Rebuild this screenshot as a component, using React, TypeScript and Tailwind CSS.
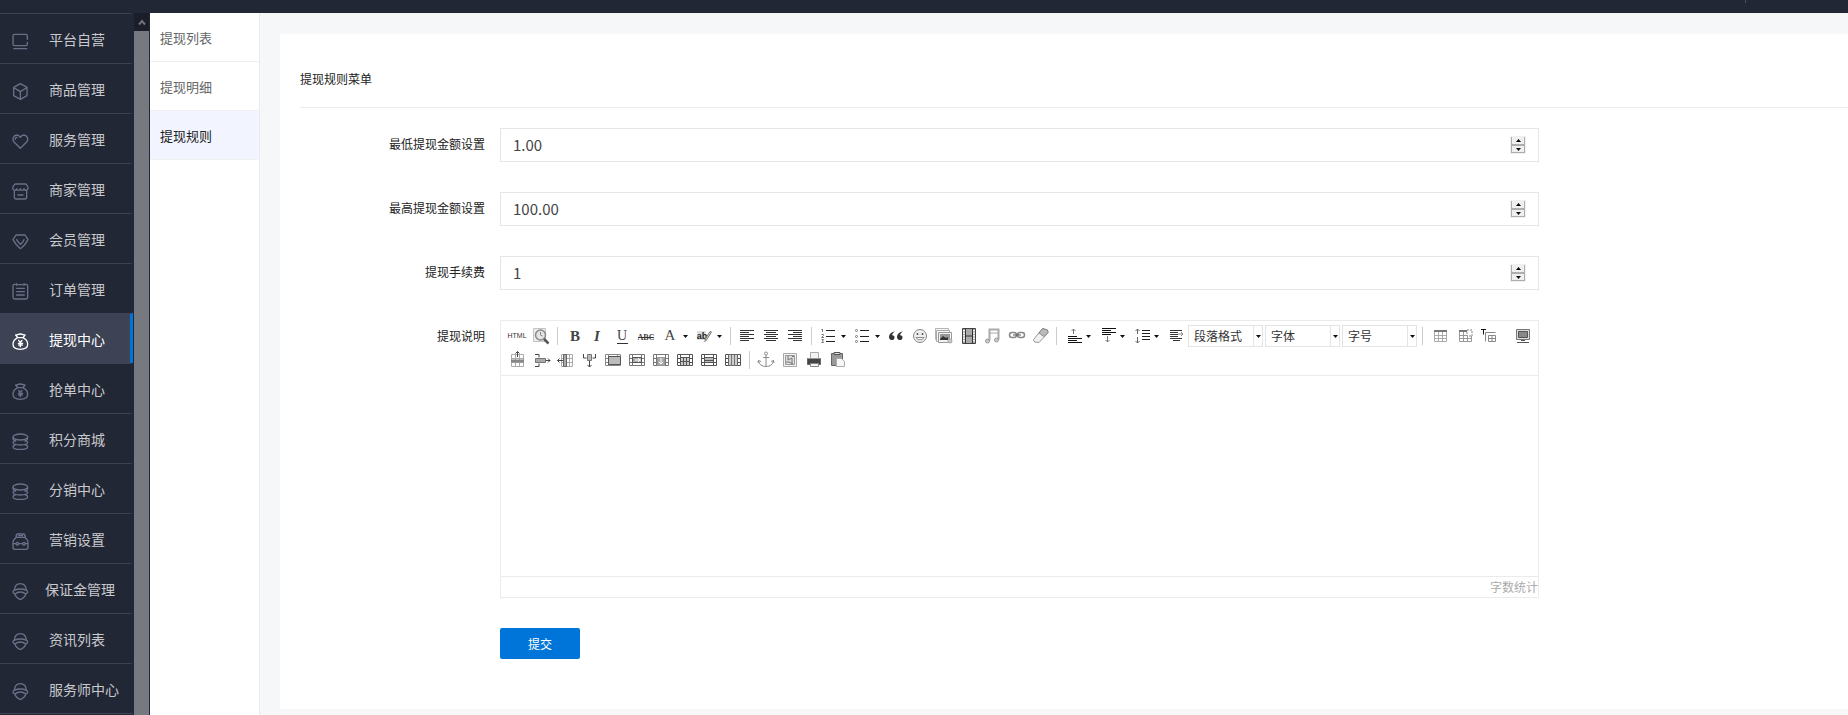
import { useState } from 'react'
import type { ReactNode } from 'react'
import clsx from 'clsx'

type IconProps = { children: ReactNode }

// ---------- sidebar icons ----------

const MenuIcon = ({ children }: IconProps) => (
  <svg
    viewBox="0 0 51 51"
    className="h-[17px] w-[17px] shrink-0"
    fill="none"
    stroke="currentColor"
    strokeWidth="4"
    strokeLinecap="round"
    strokeLinejoin="round"
    aria-hidden="true"
  >
    {children}
  </svg>
)

const screenIcon = (
  <MenuIcon>
    <path d="M46 19V9c0-3-2-5-5-5H8C5 4 3 6 3 9v24c0 3 2 5 5 5h33c3 0 5-2 5-5v-5M6 47h38" />
  </MenuIcon>
)

const boxIcon = (
  <MenuIcon>
    <path d="M25 2 45 13v25L25 49 5 38V13zM25 48V26M25 26l-11-7M25 26l18-11M9 16l2 1" />
  </MenuIcon>
)

const heartIcon = (
  <MenuIcon>
    <path d="M25 46 6 27C0 20 3 7 14 6c5 0 9 3 11 7 2-4 6-7 11-7 11 1 14 14 8 21zM10 19c0-4 2-6 5-6" />
  </MenuIcon>
)

const shopIcon = (
  <MenuIcon>
    <path d="M11 3h29c4 0 8 8 8 13 0 7-11 8-12 1-1 7-10 7-11 0-1 7-10 7-11 0-1 7-12 6-12-1C2 11 7 3 11 3zM7 24v18c0 4 2 6 6 6h25c4 0 6-2 6-6V24M18 36h15" />
  </MenuIcon>
)

const gemIcon = (
  <MenuIcon>
    <path d="M12 6h27l9 14c-6 12-13 20-21 26-1 1-2 1-3 0C16 40 9 32 3 20zM14 20c4 7 7 11 11 14 5-3 8-7 11-14" />
  </MenuIcon>
)

const orderIcon = (
  <MenuIcon>
    <path d="M12 4H8C5 4 3 6 3 9v34c0 3 2 5 5 5h34c3 0 5-2 5-5V9c0-3-2-5-5-5h-4M18 5h14M14 16h23M14 26h23M14 36h23M14 2v5M36 2v5" />
  </MenuIcon>
)

const purseIcon = (
  <MenuIcon>
    <path d="M17 14C9 18 3 26 3 34c0 9 8 15 22 15s22-6 22-15c0-8-6-16-14-20M17 14 11 6c5 1 6-3 14-3s9 4 14 3l-6 8zM20 22l5 7 5-7M19 31h13M20 36h11M25 29v12" />
  </MenuIcon>
)

const coinsIcon = (
  <MenuIcon>
    <ellipse cx="25" cy="12" rx="22" ry="9" />
    <path d="M3 14c0 6 4 9 8 10M47 14c0 6-4 9-8 10M11 23c-5 1-8 3-8 5 0 5 10 8 22 8s22-3 22-8c0-2-3-4-8-5M9 36c-4 1-6 3-6 5 0 5 10 8 22 8s22-3 22-8c0-2-2-4-6-5" />
  </MenuIcon>
)

const bagIcon = (
  <MenuIcon>
    <path d="M13 13 7 19c-3 3-4 5-4 9v15c0 4 2 6 6 6h33c4 0 6-2 6-6V28c0-4-1-6-4-9l-6-6M12 13c0-6 2-10 6-10h16c4 0 6 4 6 10zM20 8h12M4 32h8M20 32h12M40 32h8" />
    <circle cx="16" cy="32" r="4" />
    <circle cx="36" cy="32" r="4" />
  </MenuIcon>
)

const faceIcon = (
  <MenuIcon>
    <path d="M7 22C8 9 15 2 25 2s17 7 18 20M6 22c12-5 26-5 38 0M6 22c-4 3-4 8 1 9M44 22c4 3 4 8-1 9M9 33c9-8 23-8 32 0M7 31c4 10 10 16 18 19 8-3 14-9 18-19" />
  </MenuIcon>
)

type MenuItem = { label: string; icon: ReactNode; active?: boolean; gap?: string }

const menuItems: MenuItem[] = [
  { label: '平台自营', icon: screenIcon },
  { label: '商品管理', icon: boxIcon },
  { label: '服务管理', icon: heartIcon },
  { label: '商家管理', icon: shopIcon },
  { label: '会员管理', icon: gemIcon },
  { label: '订单管理', icon: orderIcon },
  { label: '提现中心', icon: purseIcon, active: true },
  { label: '抢单中心', icon: purseIcon },
  { label: '积分商城', icon: coinsIcon },
  { label: '分销中心', icon: coinsIcon },
  { label: '营销设置', icon: bagIcon },
  { label: '保证金管理', icon: faceIcon, gap: 'gap-4' },
  { label: '资讯列表', icon: faceIcon },
  { label: '服务师中心', icon: faceIcon }
]

const subItems = [
  { label: '提现列表' },
  { label: '提现明细' },
  { label: '提现规则', active: true }
]

const Sidebar = () => (
  <aside className="flex w-[150px] shrink-0 overflow-hidden bg-[#222736] pr-px">
    <nav className="mr-px min-w-0 flex-1">
      <ul className="border-b border-[#3d4254]">
        {menuItems.map(({ label, icon, active, gap }) => (
          <li key={label}>
            <a
              href="#"
              className={clsx(
                'flex h-[50px] items-center border-t border-r-[3px] border-t-[#3d4254] pt-[5px] pl-3 text-sm whitespace-nowrap',
                gap ?? 'gap-5',
                active ? 'border-r-[#0075d9] bg-[#3d4254] text-white' : 'border-r-transparent text-[#6b7088]'
              )}
            >
              {icon}
              <span className={clsx('pb-[5px]', active ? 'text-white' : 'text-[#c8c9cd]')}>{label}</span>
            </a>
          </li>
        ))}
      </ul>
    </nav>
    <div className="flex w-[15px] flex-col bg-[#767980]" aria-hidden="true">
      <div className="flex h-[18px] items-center justify-center bg-[#1b1e29]">
        <svg viewBox="0 0 8 7" className="h-[7px] w-2" fill="none" stroke="#6f727b" strokeWidth="2">
          <path d="M1 5.5 4 2l3 3.5" />
        </svg>
      </div>
    </div>
  </aside>
)

const SubMenu = () => (
  <nav className="w-[110px] shrink-0 border-r border-[#ebebeb] bg-white">
    <ul>
      {subItems.map(({ label, active }) => (
        <li key={label}>
          <a
            href="#"
            className={clsx(
              'flex h-[49px] items-center border-b border-[#f0f0f0] pt-0.5 pl-2.5 text-[13px]',
              active ? 'bg-[#f2f5ff] text-[#222]' : 'text-[#666]'
            )}
          >
            {label}
          </a>
        </li>
      ))}
    </ul>
  </nav>
)

// ---------- editor toolbar ----------

const ToolIcon = ({ children }: IconProps) => (
  <svg viewBox="0 0 20 20" className="h-5 w-5" fill="none" stroke="#555" strokeWidth="1" aria-hidden="true">
    {children}
  </svg>
)

const glyph = (text: string, x: number, y: number, size: number, extra?: string) => (
  <text
    x={x}
    y={y}
    fontSize={size}
    textAnchor="middle"
    fill="#444"
    stroke="none"
    className={clsx('font-["Liberation_Serif",serif]', extra)}
  >
    {text}
  </text>
)

const grid = 'M4.5 4.5h12v12h-12zM8.5 4.5v12M12.5 4.5v12M4.5 8.5h12M4.5 12.5h12'
const film = 'M2.5 4.5h15v11h-15zM2.5 8.5h3M2.5 12.5h3M14.5 8.5h3M14.5 12.5h3M5.5 4.5v11M14.5 4.5v11'

type Tool =
  | { kind: 'button'; title: string; icon: ReactNode; menu?: boolean }
  | { kind: 'select'; title: string }
  | { kind: 'line' }
  | { kind: 'space' }

const line: Tool = { kind: 'line' }
const button = (title: string, icon: ReactNode, menu = false): Tool => ({ kind: 'button', title, icon, menu })

const tools: Tool[] = [
  button(
    '源代码',
    <text x="10" y="12" fontSize="7" textAnchor="middle" fill="#333" stroke="none" className='font-["Liberation_Sans",sans-serif]'>
      HTML
    </text>
  ),
  button(
    '预览',
    <>
      <path d="M2.5 2.5h12v13h-12z" fill="#eee" stroke="#c4c4c4" />
      <circle cx="9.5" cy="9" r="5" fill="#e4e4e4" stroke="#8a8a8a" strokeWidth="1.5" />
      <path d="M9.5 6v3l2 1" stroke="#888" />
      <path d="m13 13 4.5 4.5" stroke="#555" strokeWidth="2.5" />
    </>
  ),
  line,
  button('加粗', glyph('B', 11, 15, 15, 'font-bold')),
  button('斜体', glyph('I', 9, 15, 15, 'font-bold italic')),
  button('下划线', <>{glyph('U', 10, 14, 14)}<path d="M5 17.5h11" stroke="#333" /></>),
  button('删除线', <>{glyph('ABC', 10, 14, 8, 'font-bold')}<path d="M2 11.5h16" stroke="#333" /></>),
  button('字体颜色', glyph('A', 10, 14, 15), true),
  button(
    '背景色',
    <>
      <path d="M3 5h9v9H3z" fill="#ddd" stroke="none" />
      <text x="8" y="13" fontSize="9" textAnchor="middle" fill="#222" stroke="none" className='font-["Liberation_Sans",sans-serif] font-bold'>
        ab
      </text>
      <path d="m17.5 6-5 8-1.5 1.5.3-2.5L16 5.5z" fill="#ddd" stroke="#777" />
    </>,
    true
  ),
  line,
  button('居左对齐', <path d="M3 4.5h14M3 6.5h9M3 8.5h14M3 10.5h9M3 12.5h14M3 14.5h9" stroke="#333" />),
  button('居中对齐', <path d="M3 4.5h14M5 6.5h10M3 8.5h14M5 10.5h10M3 12.5h14M5 14.5h10" stroke="#333" />),
  button('居右对齐', <path d="M3 4.5h14M8 6.5h9M3 8.5h14M8 10.5h9M3 12.5h14M8 14.5h9" stroke="#333" />),
  line,
  button(
    '有序列表',
    <>
      <path d="M8 4.5h9M8 10.5h9M8 15.5h9" stroke="#222" />
      <path d="M4.5 3v3M3.5 3.5h1M3.5 8.5h2v1l-2 2H6M3.5 13.5h2l-1 1.5 1 1.5h-2" stroke="#777" />
    </>,
    true
  ),
  button(
    '无序列表',
    <>
      <path d="M8 4.5h9M8 10.5h9M8 15.5h9" stroke="#222" />
      <circle cx="4.5" cy="4.5" r="1" stroke="#777" />
      <circle cx="4.5" cy="10.5" r="1" stroke="#777" />
      <circle cx="4.5" cy="15.5" r="1" stroke="#777" />
    </>,
    true
  ),
  button(
    '引用',
    <g fill="#333" stroke="none">
      <path d="M9 5.5C5 6 3 8.500 3 11c0 2 1.200 3 2.800 3s2.700-1 2.700-2.600S7.300 9 6 9.200C6.300 7.800 7.300 6.500 9 5.500z" />
      <path d="M17 5.500c-4 .5-6 3-6 5.500 0 2 1.200 3 2.800 3s2.700-1 2.700-2.600S15.300 9 14 9.200c.3-1.400 1.300-2.700 3-3.700z" />
    </g>
  ),
  button(
    '表情',
    <>
      <circle cx="10" cy="10" r="6.5" fill="#eee" stroke="#888" />
      <path d="M7.5 7v2M12.5 7v2" stroke="#555" strokeWidth="1.5" />
      <path d="M6 11.5c1.5 3 6.5 3 8 0z" fill="#fff" stroke="#888" />
    </>
  ),
  button(
    '多图上传',
    <>
      <path d="M1.5 2.5h13v11h-13z" fill="#f6f6f6" stroke="#b5b5b5" />
      <path d="M2.5 4.5h13v11h-13z" fill="#f6f6f6" stroke="#aaa" />
      <path d="M4.5 6.5h13v10h-13z" fill="#f2f2f2" stroke="#999" />
      <path d="M6 8h10v6H6z" fill="#999" stroke="none" />
      <path d="m6 13 3-3 3 2 2-1v3H6z" fill="#333" stroke="none" />
      <circle cx="16" cy="15" r="2" fill="#ccc" stroke="#aaa" />
    </>
  ),
  button(
    '视频',
    <>
      <path d="M4.5 2.5h13v15h-13z" fill="#aaa" stroke="#444" />
      <path d="M7.5 2.5v15M14.5 2.5v15M7.5 10h7" stroke="#333" />
      <path d="M6 4v12M16 4v12" stroke="#eee" strokeWidth="2" strokeDasharray="1.5 1" />
    </>
  ),
  button(
    '音乐',
    <>
      <path d="M7.5 14.5v-11h9v10" stroke="#aaa" strokeWidth="2" />
      <path d="M8 7h8" stroke="#aaa" />
      <circle cx="5.5" cy="15" r="2" fill="#ccc" stroke="#999" />
      <circle cx="14.5" cy="14" r="2" fill="#ccc" stroke="#999" />
    </>
  ),
  button(
    '超链接',
    <>
      <rect x="3.5" y="6.5" width="7" height="5" rx="2.5" stroke="#888" strokeWidth="1.5" />
      <rect x="11.5" y="6.5" width="7" height="5" rx="2.5" stroke="#888" strokeWidth="1.5" />
      <path d="M7 9h8" stroke="#555" />
    </>
  ),
  button(
    '清除格式',
    <>
      <path d="m3.5 13.5 9-11 5 1.5.5 3-9 9.5-4.500-.5z" fill="#f0f0f0" stroke="#999" />
      <path d="m9 7 5 3.5 4-4-.5-2.500-5-1.500z" fill="#bbb" stroke="#888" />
    </>
  ),
  line,
  button('段前距', <><path d="M5 10.5h9M5 12.5h14M5 14.5h9M5 16.5h14" stroke="#111" /><path d="M10.5 8V3M8.5 5l2-2 2 2" stroke="#777" /></>, true),
  button('段后距', <><path d="M5 2.5h14M5 4.5h9M5 6.5h14M5 8.5h9" stroke="#111" /><path d="M10.5 10v6M8.5 14l2 2 2-2" stroke="#777" /></>, true),
  button('行间距', <><path d="M11 4.5h8M11 7.5h8M11 10.5h8M11 13.5h8" stroke="#222" /><path d="M6.5 8V3M4.5 5l2-2 2 2M6.5 11v6M4.5 15l2 2 2-2" stroke="#666" /></>, true),
  button('首行缩进', <><path d="M5 4.5h12M5 6.5h8M5 8.5h8M5 10.5h8M5 12.5h12M8 14.5h7" stroke="#333" /><path d="M13 8h5M16 6l2 2-2 2" stroke="#888" /></>),
  { kind: 'select', title: '段落格式' },
  { kind: 'select', title: '字体' },
  { kind: 'select', title: '字号' },
  line,
  button('插入表格', <><path d="M5.5 4.5h12v11h-12zM9.5 6v10M13.5 6v10M5 9.5h13M5 12.5h13" stroke="#aaa" /><path d="M5 5h13" stroke="#777" strokeWidth="2" /></>),
  button('删除表格', <><path d="M6.5 4.5h12v11h-12zM10.5 6v10M14.5 6v10M6 9.5h13M6 12.5h13" stroke="#999" /><path d="M6 5h8" stroke="#777" strokeWidth="2" /><path d="M14 4h5v6h-5z" fill="#fff" stroke="#888" strokeDasharray="2 1" /></>),
  button('表格标题', <><path d="M4 3.5h5M6.5 3.5v5" stroke="#111" /><path d="M8.5 6.5h10M8.5 6.5v9M11.5 9.5h7v6h-7zM15 9.5v6M11.5 12.5h7" stroke="#888" /></>),
  { kind: 'space' },
  button('全屏', <><path d="M3.5 3.5h13v10h-13z" fill="#ddd" stroke="#777" /><path d="M5.5 5.5h9v6h-9z" fill="#888" stroke="#555" /><path d="M8 14.5h4M4 16.500h12" stroke="#555" /></>),
  button('前插入行', <><path d={grid} stroke="#aaa" /><path d="M4 9.5h13v3H4z" fill="#888" stroke="none" /><path d="M10.5 7V1.5M8.5 3.5l2-2 2 2" stroke="#444" /></>),
  button('拆分行', <><path d="M4 4.5h4v3M4 16.5h4v-3M15 10.5h4M17 8.5l2 2-2 2" stroke="#444" /><path d="M4.5 8.5h10v4h-10z" fill="#aaa" stroke="#777" /></>),
  button('前插入列', <><path d="M6.5 4.5h11v12h-11zM6.5 8.5h11M6.5 12.5h11M14.5 4.5v12" stroke="#aaa" /><path d="M8.5 4.5h3v12h-3z" fill="#aaa" stroke="#666" /><path d="M8 10.5H2.5M4.5 8.5l-2 2 2 2" stroke="#444" /></>),
  button('拆分列', <><path d="M4.500 4v4h3M16.5 4v4h-3M10.5 11v6M8.5 15l2 2 2-2" stroke="#444" /><path d="M8.5 4.5h4v6h-4z" fill="#bbb" stroke="#777" /></>),
  button('合并单元格', <><path d={film} stroke="#888" /><path d="M5.5 6.5h12v8h-12z" fill="#bbb" stroke="#555" /></>),
  button('右合并单元格', <><path d={film} stroke="#777" /><path d="M5.5 7.5h9v5h-9z" fill="#aaa" stroke="#555" /><path d="M8 10h6M11 8l2 2-2 2" stroke="#fff" /></>),
  button('下合并单元格', <><path d={film} stroke="#777" /><path d="M6.5 7.5h7v8h-7z" fill="#aaa" stroke="#999" /><path d="M10 8v6M8 12l2 2 2-2" stroke="#fff" /></>),
  button('拆分单元格', <><path d={film} stroke="#555" /><path d="M5.5 7.5h9v8h-9z" fill="#ccc" stroke="#555" /><path d="M8.5 7v8M11.5 7v8M5 11.5h10" stroke="#555" /></>),
  button('拆分成行', <><path d={film} stroke="#555" /><path d="M5.5 7.5h9v5h-9z" fill="#bbb" stroke="#555" /><path d="M5 10.5h10" stroke="#555" /></>),
  button('拆分成列', <><path d={film} stroke="#555" /><path d="M5.5 4.5h9v11h-9z" fill="#ccc" stroke="#666" /><path d="M8.5 5v11M11.5 5v11" stroke="#777" /></>),
  line,
  button('锚点', <><circle cx="10" cy="3.5" r="1.5" stroke="#888" /><path d="M10 5v11.5M7 7.5h6M2.5 10.5c.5 4 3.5 6 7.5 6s7-2 7.5-6M2 13l.5-2.500 2.500 1M18 13l-.5-2.500-2.500 1" stroke="#888" /></>),
  button('百度地图', <><path d="M3.5 3.5h13v13h-13z" fill="#f2f2f2" stroke="#aaa" /><path d="M5.5 5.5h9v9h-9z" fill="#ddd" stroke="#999" /><path d="M8 6v4l4-2v6M6 12h3l4 2M12 6.5h2" stroke="#777" /></>),
  button('打印', <><path d="M6.5 2.5h8v6h-8z" fill="#f4f4f4" stroke="#aaa" /><path d="M3.5 8.5h13v6h-13z" fill="#444" stroke="#666" /><path d="M4 8.5h12" stroke="#999" /><path d="M6.5 13.5h8v3h-8z" fill="#f4f4f4" stroke="#888" /></>),
  button('从草稿箱加载', <><path d="M3.5 3.5h11v12h-11z" fill="#999" stroke="#666" /><path d="M6 2.5h6v2H6z" fill="#ddd" stroke="#555" /><path d="M8.5 8.5h5l3 3v5h-8z" fill="#f7f7f7" stroke="#aaa" /></>)
]

const Caret = () => (
  <svg viewBox="0 0 5 3" className="h-[3px] w-[5px]" fill="#111" aria-hidden="true">
    <path d="M0 0h5L2.5 3z" />
  </svg>
)

const ToolItem = ({ tool }: { tool: Tool }) => {
  switch (tool.kind) {
    case 'line':
      return (
        <span className="flex h-6 w-[9px] items-center justify-center">
          <span className="h-[18px] w-px bg-[#ccc]" />
        </span>
      )
    case 'space':
      return <span className="w-3" />
    case 'select':
      return (
        <div className="mx-px flex h-[22px] w-[75px] self-center border border-[#e4e4e4]">
          <select
            aria-label={tool.title}
            className="min-w-0 flex-1 appearance-none border-r border-[#e4e4e4] pl-[5px] text-xs text-[#333]"
          >
            <option>{tool.title}</option>
          </select>
          <span className="flex w-2 items-center justify-end pr-px">
            <Caret />
          </span>
        </div>
      )
    default:
      return (
        <button type="button" title={tool.title} className={clsx('flex h-6 items-center pl-0.5', tool.menu ? 'w-[34px]' : 'w-6')}>
          <ToolIcon>{tool.icon}</ToolIcon>
          {tool.menu && (
            <span className="pl-[3px]">
              <Caret />
            </span>
          )}
        </button>
      )
  }
}

const Editor = ({ id }: { id: string }) => (
  <div className="border border-[#ebebeb]">
    <div className="flex flex-wrap border-b border-[#ebebeb] py-[3px] pl-1">
      {tools.map((tool, i) => (
        <ToolItem key={i} tool={tool} />
      ))}
    </div>
    <textarea id={id} className="block h-[200px] w-full resize-none p-2 text-base outline-none" />
    <div className="flex h-[21px] items-center justify-end border-t border-[#ebebeb] text-xs text-[#aaa]">字数统计</div>
  </div>
)

// ---------- form ----------

type FieldProps = { id: string; label: string; children: ReactNode }

const Field = ({ id, label, children }: FieldProps) => (
  <div className="grid grid-cols-[185px_minmax(0,1039px)] gap-[15px]">
    <label htmlFor={id} className="flex h-8 items-center justify-end text-xs text-[#222]">
      {label}
    </label>
    {children}
  </div>
)

type NumberBoxProps = { id: string; initial: string }

const NumberBox = ({ id, initial }: NumberBoxProps) => {
  const [value, setValue] = useState(initial)
  const step = (n: number) => setValue(String(Number(value) + n))

  return (
    <div className="flex h-[34px] items-center border border-[#e6e6e6] px-3">
      <input
        id={id}
        type="number"
        value={value}
        onChange={(e) => setValue(e.target.value)}
        className="min-w-0 flex-1 [appearance:textfield] text-[15px] text-[#444] outline-none [&::-webkit-inner-spin-button]:appearance-none"
      />
      <div className="flex h-[18px] w-4 flex-col bg-[#f0f0f0] p-px">
        <button
          type="button"
          aria-label="增加"
          onClick={() => step(1)}
          className="flex h-2 items-center justify-center border-x border-b border-[#adadad]"
        >
          <svg viewBox="0 0 5 3" className="h-[3px] w-[5px]" aria-hidden="true">
            <path d="M0 3h5L2.5 0z" />
          </svg>
        </button>
        <button
          type="button"
          aria-label="减少"
          onClick={() => step(-1)}
          className="flex h-2 items-center justify-center border border-[#adadad]"
        >
          <Caret />
        </button>
      </div>
    </div>
  )
}

const RuleForm = () => (
  <form className="flex flex-col gap-[30px] pt-5 pb-[50px]" onSubmit={(e) => e.preventDefault()}>
    <Field id="min-amount" label="最低提现金额设置">
      <NumberBox id="min-amount" initial="1.00" />
    </Field>
    <Field id="max-amount" label="最高提现金额设置">
      <NumberBox id="max-amount" initial="100.00" />
    </Field>
    <Field id="fee" label="提现手续费">
      <NumberBox id="fee" initial="1" />
    </Field>
    <Field id="notes" label="提现说明">
      <Editor id="notes" />
    </Field>
    <button type="submit" className="ml-[200px] h-[31px] w-20 rounded-xs bg-[#0075d9] text-xs text-white">
      提交
    </button>
  </form>
)

const App = () => {
  return (
    <div className='flex h-screen flex-col overflow-hidden bg-[#f6f7f9] font-["Noto_Sans_CJK_SC",sans-serif]'>
      <header className="flex h-[13px] shrink-0 justify-end bg-[#222736] pr-[102px]">
        <span className="h-[3px] w-px bg-[#4a4f60]" />
      </header>
      <div className="flex min-h-0 flex-1">
        <Sidebar />
        <SubMenu />
        <main className="min-w-0 flex-1 overflow-hidden pt-[21px] pl-5">
          <section className="bg-white pl-5">
            <h1 className="flex h-[74px] items-center border-b border-[#ebebeb] pt-4 text-xs text-[#222]">提现规则菜单</h1>
            <RuleForm />
          </section>
        </main>
      </div>
    </div>
  )
}

export default App
